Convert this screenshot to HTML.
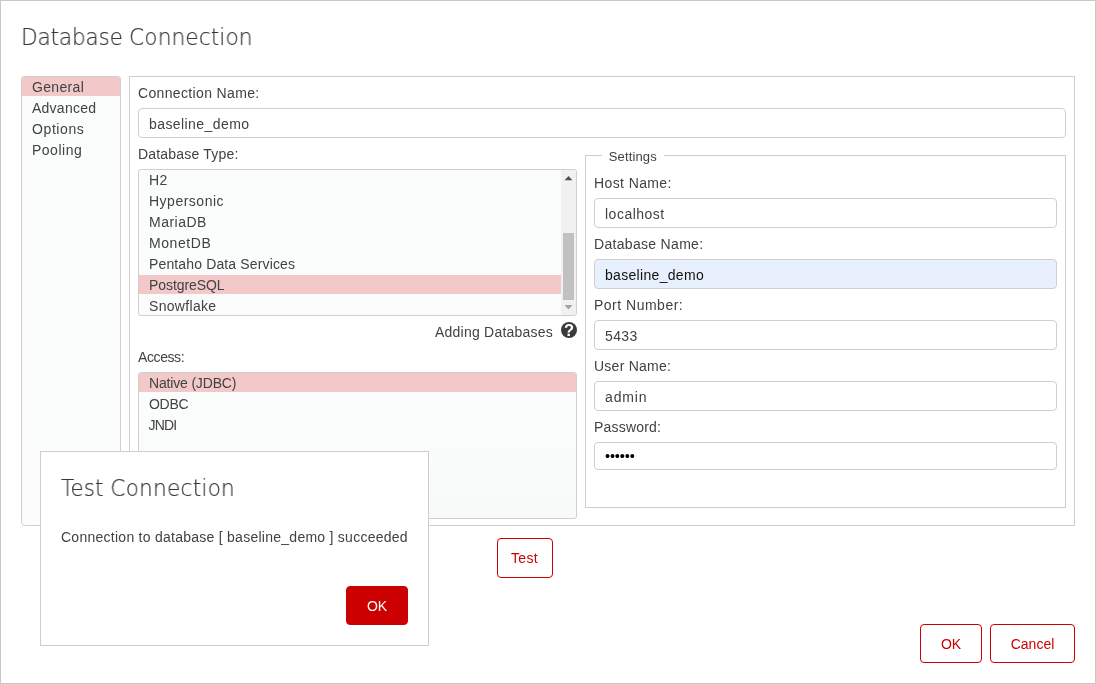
<!DOCTYPE html>
<html lang="en">
<head>
<meta charset="utf-8">
<title>Database Connection</title>
<style>
*{box-sizing:border-box;margin:0;padding:0}
html,body{width:1096px;height:684px;overflow:hidden;background:#fff}
body{position:relative;font-family:"Liberation Sans",sans-serif;font-size:14px;color:#424242;line-height:19px}
.abs,.t,.row,.box,.inp,.btn{position:absolute}
.t,.row,.inp,.btn{will-change:transform}
.frame{left:0;top:0;width:1096px;height:684px;border:1px solid #c8c8c8}
.t{white-space:nowrap;height:19px;line-height:19px}
.title{font-family:"DejaVu Sans Light","DejaVu Sans","Liberation Sans",sans-serif;font-weight:200;font-size:23.5px;line-height:30px;height:30px;color:#383838;-webkit-text-stroke:0.2px #383838;transform:scaleX(0.918);transform-origin:0 0}
.box{border:1px solid #cfcfcf}
.list{background:#fbfdfd;border-radius:3px;overflow:hidden}
.row{left:0;right:0;height:19px;line-height:21px;padding-left:10px;white-space:nowrap}
.sel{background:#f2c8c8}
.inp{height:30px;border:1px solid #cfcfcf;border-radius:4px;background:#fff;line-height:30px;padding-left:10px;white-space:nowrap}
.btn{height:40px;border:1px solid #cc0000;border-radius:4px;color:#cc0000;background:#fff;text-align:center;line-height:38px}
</style>
</head>
<body>
<div class="abs frame"></div>

<div class="t title" style="left:21px;top:22px;word-spacing:-0.65px"><span style="letter-spacing:-0.15px">Database</span> <span style="letter-spacing:0.17px">Connection</span></div>

<!-- left category list -->
<div class="box list" style="left:21px;top:76px;width:100px;height:450px;border-radius:3px 3px 4px 4px">
  <div class="row sel" style="letter-spacing:0.33px;top:0">General</div>
  <div class="row" style="letter-spacing:0.25px;top:21px">Advanced</div>
  <div class="row" style="letter-spacing:0.6px;top:42px">Options</div>
  <div class="row" style="letter-spacing:0.5px;top:63px">Pooling</div>
</div>

<!-- main panel -->
<div class="box" style="left:129px;top:76px;width:946px;height:450px;border-color:#cdcdcd"></div>

<div class="t" style="letter-spacing:0.35px;left:138px;top:84px">Connection Name:</div>
<div class="inp" style="left:138px;top:108px;width:928px;letter-spacing:0.42px">baseline_demo</div>

<div class="t" style="letter-spacing:0.19px;left:138px;top:145px">Database Type:</div>
<div class="box list" style="left:138px;top:169px;width:439px;height:147px">
  <div class="row" style="letter-spacing:0.5px;top:0">H2</div>
  <div class="row" style="letter-spacing:0.5px;top:21px">Hypersonic</div>
  <div class="row" style="letter-spacing:0.5px;top:42px">MariaDB</div>
  <div class="row" style="letter-spacing:0.58px;top:63px">MonetDB</div>
  <div class="row" style="letter-spacing:0.14px;top:84px">Pentaho Data Services</div>
  <div class="row sel" style="letter-spacing:-0.08px;top:105px">PostgreSQL</div>
  <div class="row" style="letter-spacing:0.31px;top:126px">Snowflake</div>
  <div class="abs" style="right:0;top:0;width:15px;height:145px;background:#f1f1f1">
    <svg class="abs" style="left:0;top:0" width="15" height="145" viewBox="0 0 15 145">
      <path d="M3.6 10.2 L7.5 6 L11.4 10.2 Z" fill="#505050"/>
      <rect x="2" y="63" width="11" height="67" fill="#c1c1c1"/>
      <path d="M3.5 135 L11.5 135 L7.5 139.5 Z" fill="#a3a3a3"/>
    </svg>
  </div>
</div>

<div class="t" style="letter-spacing:0.23px;left:435px;top:323px">Adding Databases</div>
<svg class="abs" style="left:561px;top:322px" width="16" height="16" viewBox="0 0 16 16">
  <circle cx="8" cy="8" r="8" fill="#3a3a3a"/>
  <text x="8" y="13.7" text-anchor="middle" font-family="Liberation Sans, sans-serif" font-weight="bold" font-size="16.5" fill="#fff">?</text>
</svg>

<div class="t" style="letter-spacing:-0.4px;left:138px;top:348px">Access:</div>
<div class="box list" style="left:138px;top:372px;width:439px;height:147px;background:linear-gradient(#fbfdfd 0%,#fbfcfc 35%,#f8f9f9 100%)">
  <div class="row sel" style="letter-spacing:-0.17px;top:0">Native (JDBC)</div>
  <div class="row" style="top:21px;letter-spacing:-0.3px">ODBC</div>
  <div class="row" style="letter-spacing:-0.8px;top:42px;padding-left:9.5px">JNDI</div>
</div>

<!-- settings fieldset -->
<div class="box" style="left:585px;top:155px;width:481px;height:353px;border-color:#cdcdcd"></div>
<div class="t" style="letter-spacing:0.15px;left:602px;top:147px;width:62px;background:#fff;font-size:13px;padding-left:6.7px">Settings</div>

<div class="t" style="letter-spacing:0.39px;left:594px;top:174px">Host Name:</div>
<div class="inp" style="letter-spacing:0.5px;left:594px;top:198px;width:463px">localhost</div>
<div class="t" style="letter-spacing:0.31px;left:594px;top:235px">Database Name:</div>
<div class="inp" style="left:594px;top:259px;width:463px;background:#e8f0fe;color:#111;letter-spacing:0.31px">baseline_demo</div>
<div class="t" style="letter-spacing:0.5px;left:594px;top:296px">Port Number:</div>
<div class="inp" style="letter-spacing:0.4px;left:594px;top:320px;width:463px">5433</div>
<div class="t" style="letter-spacing:0.25px;left:594px;top:357px">User Name:</div>
<div class="inp" style="letter-spacing:0.85px;left:594px;top:381px;width:463px">admin</div>
<div class="t" style="letter-spacing:0.2px;left:594px;top:418px">Password:</div>
<div class="inp" style="left:594px;top:442px;width:463px;height:28px;line-height:26px;color:#000;font-size:14.5px;letter-spacing:-0.15px">••••••</div>

<div class="btn" style="left:497px;top:538px;width:56px;letter-spacing:0.3px;padding-right:1px">Test</div>
<div class="btn" style="left:920px;top:624px;width:62px;height:39px">OK</div>
<div class="btn" style="left:990px;top:624px;width:85px;height:39px">Cancel</div>

<!-- test connection dialog -->
<div class="box" style="left:40px;top:451px;width:389px;height:195px;background:#fff;border-color:#cdcdcd"></div>
<div class="t title" style="left:60.6px;top:473px">Test <span style="letter-spacing:0.28px">Connection</span></div>
<div class="t" style="letter-spacing:0.26px;left:61px;top:528px">Connection to database [ baseline_demo ] succeeded</div>
<div class="btn" style="left:346px;top:586px;width:62px;height:39px;background:#cc0000;color:#fff">OK</div>
</body>
</html>
